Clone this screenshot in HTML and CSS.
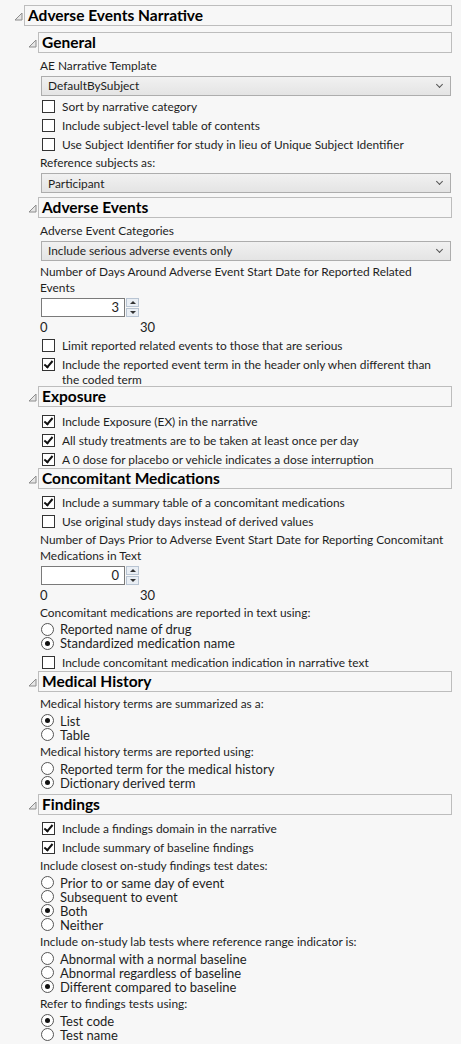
FILE: index.html
```html
<!DOCTYPE html>
<html>
<head>
<meta charset="utf-8">
<link rel="stylesheet" href="styles.css">
</head>
<body>
<div class="outline top">
  <div class="hdr">
    <svg class="tri" width="9" height="9" viewBox="0 0 9 9"><polygon points="8,1 8,8 1,8" fill="#e6e6e6" stroke="#8c8c8c" stroke-width="1"/></svg>
    <div class="hbox">Adverse Events Narrative</div>
  </div>
  <div class="kids">

    <div class="outline">
      <div class="hdr">
        <svg class="tri" width="9" height="9" viewBox="0 0 9 9"><polygon points="8,1 8,8 1,8" fill="#e6e6e6" stroke="#8c8c8c" stroke-width="1"/></svg>
        <div class="hbox">General</div>
      </div>
      <div class="body">
        <div class="label">AE Narrative Template</div>
        <div class="select"><span>DefaultBySubject</span><span class="chev"></span></div>
        <div class="cbs">
          <div class="cb"><span class="box"></span><span>Sort by narrative category</span></div>
          <div class="cb"><span class="box"></span><span>Include subject-level table of contents</span></div>
          <div class="cb"><span class="box"></span><span>Use Subject Identifier for study in lieu of Unique Subject Identifier</span></div>
        </div>
        <div class="label">Reference subjects as:</div>
        <div class="select"><span>Participant</span><span class="chev"></span></div>
      </div>
    </div>

    <div class="outline">
      <div class="hdr">
        <svg class="tri" width="9" height="9" viewBox="0 0 9 9"><polygon points="8,1 8,8 1,8" fill="#e6e6e6" stroke="#8c8c8c" stroke-width="1"/></svg>
        <div class="hbox">Adverse Events</div>
      </div>
      <div class="body">
        <div class="label">Adverse Event Categories</div>
        <div class="select"><span>Include serious adverse events only</span><span class="chev"></span></div>
        <div class="label wrap">Number of Days Around Adverse Event Start Date for Reported Related Events</div>
        <div class="spin">
          <div class="num">3</div>
          <div class="btns"><div class="b up"></div><div class="b dn"></div></div>
        </div>
        <div class="range"><span>0</span><span>30</span></div>
        <div class="cbs tight">
          <div class="cb"><span class="box"></span><span>Limit reported related events to those that are serious</span></div>
          <div class="cb"><span class="box on"></span><span>Include the reported event term in the header only when different than the coded term</span></div>
        </div>
      </div>
    </div>

    <div class="outline">
      <div class="hdr">
        <svg class="tri" width="9" height="9" viewBox="0 0 9 9"><polygon points="8,1 8,8 1,8" fill="#e6e6e6" stroke="#8c8c8c" stroke-width="1"/></svg>
        <div class="hbox">Exposure</div>
      </div>
      <div class="body">
        <div class="cbs">
          <div class="cb"><span class="box on"></span><span>Include Exposure (EX) in the narrative</span></div>
          <div class="cb"><span class="box on"></span><span>All study treatments are to be taken at least once per day</span></div>
          <div class="cb"><span class="box on"></span><span>A 0 dose for placebo or vehicle indicates a dose interruption</span></div>
        </div>
      </div>
    </div>

    <div class="outline">
      <div class="hdr">
        <svg class="tri" width="9" height="9" viewBox="0 0 9 9"><polygon points="8,1 8,8 1,8" fill="#e6e6e6" stroke="#8c8c8c" stroke-width="1"/></svg>
        <div class="hbox">Concomitant Medications</div>
      </div>
      <div class="body">
        <div class="cbs">
          <div class="cb"><span class="box on"></span><span>Include a summary table of a concomitant medications</span></div>
          <div class="cb"><span class="box"></span><span>Use original study days instead of derived values</span></div>
        </div>
        <div class="label wrap">Number of Days Prior to Adverse Event Start Date for Reporting Concomitant Medications in Text</div>
        <div class="spin">
          <div class="num">0</div>
          <div class="btns"><div class="b up"></div><div class="b dn"></div></div>
        </div>
        <div class="range"><span>0</span><span>30</span></div>
        <div class="label">Concomitant medications are reported in text using:</div>
        <div class="radios">
          <div class="rd"><span class="dot"></span><span>Reported name of drug</span></div>
          <div class="rd"><span class="dot on"></span><span>Standardized medication name</span></div>
        </div>
        <div class="cbs">
          <div class="cb"><span class="box"></span><span>Include concomitant medication indication in narrative text</span></div>
        </div>
      </div>
    </div>

    <div class="outline">
      <div class="hdr">
        <svg class="tri" width="9" height="9" viewBox="0 0 9 9"><polygon points="8,1 8,8 1,8" fill="#e6e6e6" stroke="#8c8c8c" stroke-width="1"/></svg>
        <div class="hbox">Medical History</div>
      </div>
      <div class="body">
        <div class="label">Medical history terms are summarized as a:</div>
        <div class="radios">
          <div class="rd"><span class="dot on"></span><span>List</span></div>
          <div class="rd"><span class="dot"></span><span>Table</span></div>
        </div>
        <div class="label">Medical history terms are reported using:</div>
        <div class="radios">
          <div class="rd"><span class="dot"></span><span>Reported term for the medical history</span></div>
          <div class="rd"><span class="dot on"></span><span>Dictionary derived term</span></div>
        </div>
      </div>
    </div>

    <div class="outline">
      <div class="hdr">
        <svg class="tri" width="9" height="9" viewBox="0 0 9 9"><polygon points="8,1 8,8 1,8" fill="#e6e6e6" stroke="#8c8c8c" stroke-width="1"/></svg>
        <div class="hbox">Findings</div>
      </div>
      <div class="body">
        <div class="cbs">
          <div class="cb"><span class="box on"></span><span>Include a findings domain in the narrative</span></div>
          <div class="cb"><span class="box on"></span><span>Include summary of baseline findings</span></div>
        </div>
        <div class="label">Include closest on-study findings test dates:</div>
        <div class="radios">
          <div class="rd"><span class="dot"></span><span>Prior to or same day of event</span></div>
          <div class="rd"><span class="dot"></span><span>Subsequent to event</span></div>
          <div class="rd"><span class="dot on"></span><span>Both</span></div>
          <div class="rd"><span class="dot"></span><span>Neither</span></div>
        </div>
        <div class="label">Include on-study lab tests where reference range indicator is:</div>
        <div class="radios">
          <div class="rd"><span class="dot"></span><span>Abnormal with a normal baseline</span></div>
          <div class="rd"><span class="dot"></span><span>Abnormal regardless of baseline</span></div>
          <div class="rd"><span class="dot on"></span><span>Different compared to baseline</span></div>
        </div>
        <div class="label">Refer to findings tests using:</div>
        <div class="radios">
          <div class="rd"><span class="dot on"></span><span>Test code</span></div>
          <div class="rd"><span class="dot"></span><span>Test name</span></div>
        </div>
      </div>
    </div>

  </div>
</div>
</body>
</html>
```
FILE: styles.css
```css
html, body {
  margin: 0;
  padding: 0;
  background: #f7f7f7;
}
body {
  font-family: Lato, "Open Sans", sans-serif;
  font-size: 11.9px;
  color: #1e1e1e;
  padding: 5px 9px 0 14px;
  overflow: hidden;
  height: 1044px;
  box-sizing: border-box;
}
.hdr {
  display: flex;
  align-items: center;
  height: 21px;
}
.tri {
  flex: none;
  width: 9px;
  height: 9px;
  margin-right: 1px;
  margin-top: 2px;
}
.hbox {
  flex: 1;
  height: 21px;
  box-sizing: border-box;
  border: 1px solid #bdbdbd;
  font-weight: bold;
  font-size: 15.5px;
  line-height: 19px;
  padding-left: 3px;
  color: #000;
}
.kids {
  padding-left: 14px;
  padding-top: 6px;
}
.body {
  padding: 0 1px 4px 12px;
  display: flex;
  flex-direction: column;
}

/* labels */
.label {
  line-height: 16px;
  margin-top: 3px;
}
.label.wrap {
  padding-right: 5px;
}
.body > .label:first-child { margin-top: 4.5px; }
.cbs + .label { margin-top: 1px; }
.range + .label { margin-top: 2px; }
.radios + .label { margin-top: 2.5px; }
.cbs + .label.wrap { margin-top: 0.5px; }

/* dropdowns */
.select {
  margin-top: 2px;
  height: 20px;
  box-sizing: border-box;
  border: 1px solid #adadad;
  background: linear-gradient(#f1f1f1, #e4e4e4);
  display: flex;
  align-items: center;
  justify-content: space-between;
  padding: 0 8px 0 6px;
  margin-left: 1px;
}
.chev {
  width: 4px;
  height: 4px;
  border-right: 1px solid #555;
  border-bottom: 1px solid #555;
  transform: rotate(45deg);
  margin-top: -3px;
}

/* checkboxes */
.cbs { margin-top: 2px; }
.select + .cbs,
.range + .cbs { margin-top: 1.5px; }
.radios + .cbs { margin-top: 2.5px; }
.body > .cbs:first-child { margin-top: 4.5px; }
.body > .cbs:last-child { margin-bottom: -5px; }
.body > .cbs.tight:last-child { margin-bottom: -7px; }
.cb {
  display: flex;
  align-items: flex-start;
  line-height: 15px;
  padding: 2px 0 2px 2px;
}
.box {
  flex: none;
  width: 13px;
  height: 13px;
  box-sizing: border-box;
  border: 1px solid #333;
  background: #fff;
  margin-right: 7px;
  margin-top: 1px;
  position: relative;
}
.box.on::after {
  content: "";
  position: absolute;
  left: 3px;
  top: 0px;
  width: 3px;
  height: 7px;
  border-right: 2px solid #111;
  border-bottom: 2px solid #111;
  transform: rotate(40deg);
}

/* number spin */
.spin {
  display: flex;
  margin-top: 2.5px;
  margin-left: 1px;
}
.num {
  width: 84px;
  height: 19px;
  box-sizing: border-box;
  border: 1px solid #7a7a7a;
  background: #fff;
  text-align: right;
  padding-right: 5px;
  line-height: 17px;
  font-size: 13px;
}
.btns {
  display: flex;
  flex-direction: column;
  margin-left: 1px;
  gap: 1px;
}
.b {
  width: 13px;
  height: 9px;
  box-sizing: border-box;
  border: 1px solid #b8c4d2;
  background: #e9eef4;
  position: relative;
}
.b::after {
  content: "";
  position: absolute;
  left: 3px;
  width: 0;
  height: 0;
  border-left: 3px solid transparent;
  border-right: 3px solid transparent;
}
.b.up::after {
  top: 2px;
  border-bottom: 3px solid #333;
}
.b.dn::after {
  top: 2px;
  border-top: 3px solid #333;
}
.range {
  display: flex;
  width: 115px;
  justify-content: space-between;
  line-height: 16px;
  margin-top: 1.5px;
  font-size: 13px;
}

/* radios */
.radios { margin-top: 1.5px; }
.rd {
  display: flex;
  align-items: center;
  height: 14px;
  line-height: 14px;
  padding-left: 1px;
  font-size: 13px;
}
.dot {
  flex: none;
  width: 13px;
  height: 13px;
  box-sizing: border-box;
  border: 1px solid #555;
  border-radius: 50%;
  background: #fff;
  margin-right: 6px;
  position: relative;
}
.dot.on::after {
  content: "";
  position: absolute;
  left: 3px;
  top: 3px;
  width: 5px;
  height: 5px;
  border-radius: 50%;
  background: #111;
}
```
